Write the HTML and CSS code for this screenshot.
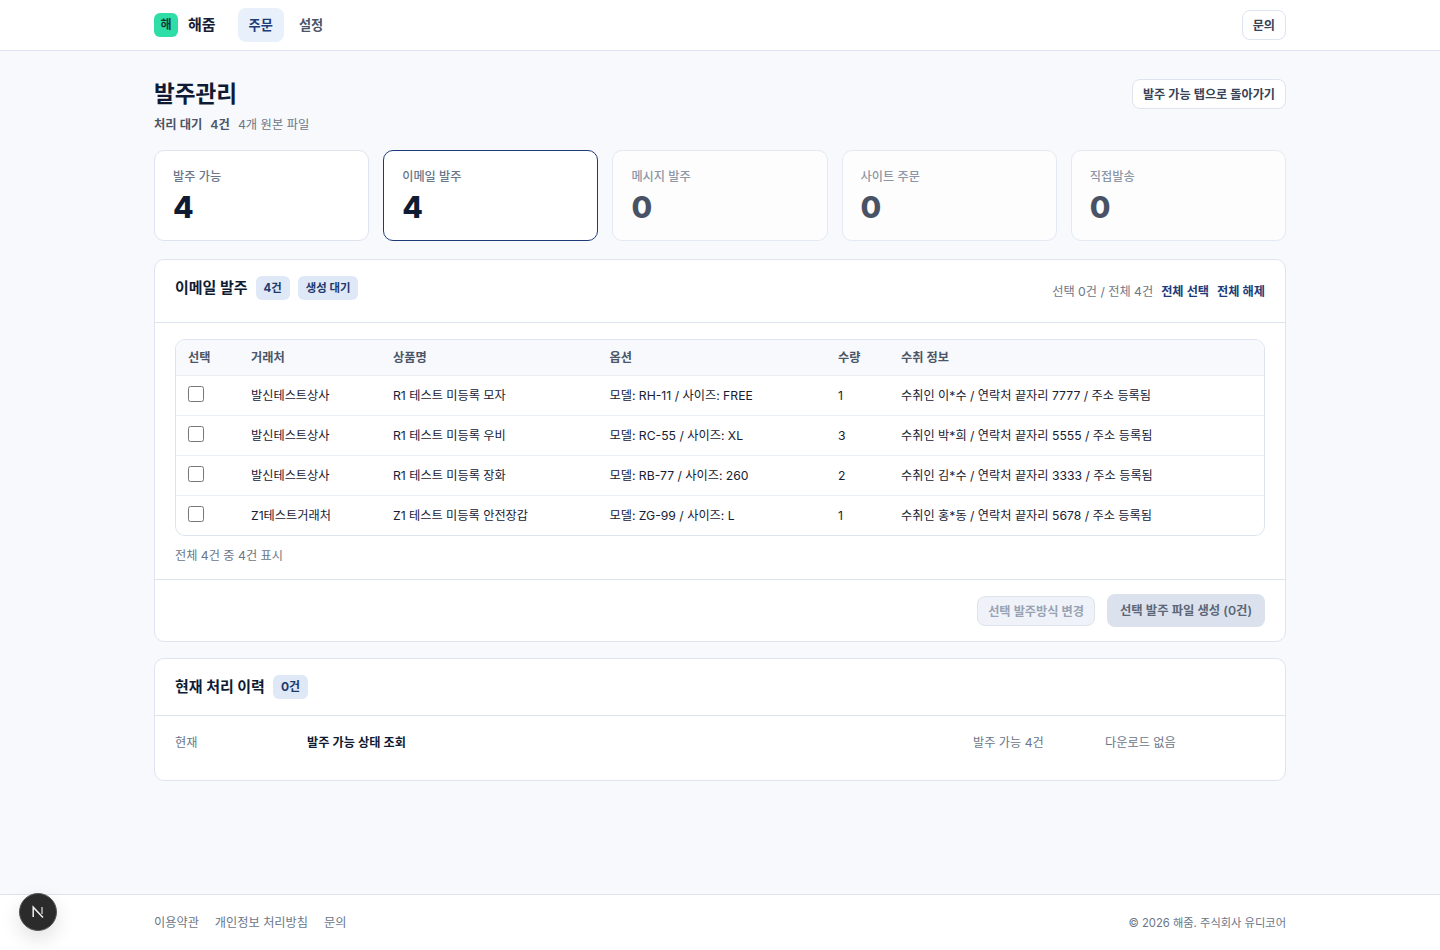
FILE: index.html
```html
<!DOCTYPE html>
<html lang="ko">
<head>
	<meta charset="utf-8">
	<title>발주관리</title>
	<link rel="stylesheet" href="styles.css">
</head>
<body>
	<header class="topbar">
		<div class="wrap topbar-inner">
			<div class="topbar-left">
				<a class="brand"><span class="brand-mark">해</span><span class="brand-name">해줌</span></a>
				<nav class="nav">
					<a class="nav-item active">주문</a>
					<a class="nav-item">설정</a>
				</nav>
			</div>
			<button class="btn-outline btn-small">문의</button>
		</div>
	</header>

	<main class="wrap main">
		<div class="page-head">
			<div>
				<h1 class="page-title">발주관리</h1>
				<p class="page-sub"><b>처리 대기</b><b>4건</b><span>4개 원본 파일</span></p>
			</div>
			<button class="btn-outline btn-back">발주 가능 탭으로 돌아가기</button>
		</div>

		<div class="stats">
			<div class="stat"><div class="stat-label">발주 가능</div><div class="stat-value">4</div></div>
			<div class="stat selected"><div class="stat-label">이메일 발주</div><div class="stat-value">4</div></div>
			<div class="stat muted"><div class="stat-label">메시지 발주</div><div class="stat-value">0</div></div>
			<div class="stat muted"><div class="stat-label">사이트 주문</div><div class="stat-value">0</div></div>
			<div class="stat muted"><div class="stat-label">직접발송</div><div class="stat-value">0</div></div>
		</div>

		<section class="panel">
			<div class="panel-head order-head">
				<div class="panel-title-row">
					<h2 class="panel-title">이메일 발주</h2>
					<span class="chip">4건</span>
					<span class="chip">생성 대기</span>
				</div>
				<div class="select-info">
					<span>선택 0건 / 전체 4건</span>
					<a class="link">전체 선택</a>
					<a class="link">전체 해제</a>
				</div>
			</div>
			<div class="panel-body">
				<div class="table-box">
					<table class="orders">
						<colgroup>
							<col class="col-check"><col class="col-vendor"><col class="col-product">
							<col class="col-option"><col class="col-qty"><col>
						</colgroup>
						<thead>
							<tr><th>선택</th><th>거래처</th><th>상품명</th><th>옵션</th><th>수량</th><th>수취 정보</th></tr>
						</thead>
						<tbody>
							<tr>
								<td><input type="checkbox" class="check"></td>
								<td>발신테스트상사</td>
								<td>R1 테스트 미등록 모자</td>
								<td>모델: RH-11 / 사이즈: FREE</td>
								<td>1</td>
								<td>수취인 이*수 / 연락처 끝자리 7777 / 주소 등록됨</td>
							</tr>
							<tr>
								<td><input type="checkbox" class="check"></td>
								<td>발신테스트상사</td>
								<td>R1 테스트 미등록 우비</td>
								<td>모델: RC-55 / 사이즈: XL</td>
								<td>3</td>
								<td>수취인 박*희 / 연락처 끝자리 5555 / 주소 등록됨</td>
							</tr>
							<tr>
								<td><input type="checkbox" class="check"></td>
								<td>발신테스트상사</td>
								<td>R1 테스트 미등록 장화</td>
								<td>모델: RB-77 / 사이즈: 260</td>
								<td>2</td>
								<td>수취인 김*수 / 연락처 끝자리 3333 / 주소 등록됨</td>
							</tr>
							<tr>
								<td><input type="checkbox" class="check"></td>
								<td>Z1테스트거래처</td>
								<td>Z1 테스트 미등록 안전장갑</td>
								<td>모델: ZG-99 / 사이즈: L</td>
								<td>1</td>
								<td>수취인 홍*동 / 연락처 끝자리 5678 / 주소 등록됨</td>
							</tr>
						</tbody>
					</table>
				</div>
				<p class="table-count">전체 4건 중 4건 표시</p>
			</div>
			<div class="panel-foot">
				<button class="btn-soft" disabled>선택 발주방식 변경</button>
				<button class="btn-primary" disabled>선택 발주 파일 생성 (0건)</button>
			</div>
		</section>

		<section class="panel">
			<div class="panel-head history-head">
				<div class="panel-title-row">
					<h2 class="panel-title">현재 처리 이력</h2>
					<span class="chip chip-large">0건</span>
				</div>
			</div>
			<div class="history-row">
				<span class="history-when">현재</span>
				<b class="history-what">발주 가능 상태 조회</b>
				<span class="history-count">발주 가능 4건</span>
				<span>다운로드 없음</span>
			</div>
		</section>
	</main>

	<footer class="footer">
		<div class="wrap footer-inner">
			<div class="footer-links">
				<a>이용약관</a>
				<a>개인정보 처리방침</a>
				<a>문의</a>
			</div>
			<div class="copyright">© 2026 해줌. 주식회사 유디코어</div>
		</div>
	</footer>

	<div class="dev-badge">
		<svg width="20" height="20" viewBox="0 0 20 20" fill="none">
			<path d="M5.2 15V5.2L15 15.6" stroke="#f2f2f2" stroke-width="1.5"/>
			<path d="M14 5v7" stroke="#bdbdbd" stroke-width="1.5"/>
		</svg>
	</div>
</body>
</html>
```

FILE: styles.css
```css
* {
	box-sizing: border-box;
}

html, body {
	margin: 0;
	padding: 0;
}

body {
	min-height: 950px;
	display: flex;
	flex-direction: column;
	background-color: #f7f9fd;
	color: #0f1b33;
	font-family: Inter, "Noto Sans CJK KR", sans-serif;
	font-size: 12.2px;
}

button {
	font-family: inherit;
}

.wrap {
	width: 1132px;
	margin: 0 auto;
}

/* top bar */
.topbar {
	height: 51px;
	background-color: #fff;
	border-bottom: 1px solid #dde4ef;
}

.topbar-inner {
	height: 50px;
	display: flex;
	align-items: center;
	justify-content: space-between;
}

.topbar-left {
	display: flex;
	align-items: center;
	gap: 22px;
}

.brand {
	display: flex;
	align-items: center;
	gap: 10px;
}

.brand-mark {
	width: 24px;
	height: 24px;
	border-radius: 6px;
	background-color: #2fdda6;
	color: #0f3b3a;
	font-size: 12px;
	font-weight: 700;
	line-height: 24px;
	text-align: center;
}

.brand-name {
	font-size: 15px;
	font-weight: 700;
	line-height: 22px;
	color: #172033;
}

.nav {
	display: flex;
	gap: 4px;
}

.nav-item {
	height: 34px;
	padding: 0 11px;
	border-radius: 8px;
	font-size: 13.2px;
	font-weight: 600;
	line-height: 34px;
	color: #4b5567;
}

.nav-item.active {
	background-color: #e8f0fc;
	color: #1d3b78;
}

.btn-outline {
	background-color: #fff;
	border: 1px solid #dde4ef;
	border-radius: 8px;
	color: #374357;
	font-size: 12.15px;
	font-weight: 600;
	line-height: 24px;
	padding: 2px 10px 0;
}

.btn-small,
.btn-back {
	height: 30px;
}

/* page head */
.main {
	flex: 1;
	padding-top: 28px;
}

.page-head {
	display: flex;
	justify-content: space-between;
	align-items: flex-start;
}

.page-title {
	margin: 0;
	font-size: 22.6px;
	font-weight: 700;
	line-height: 30px;
	color: #0f1b33;
}

.page-sub {
	margin: 7px 0 0;
	display: flex;
	gap: 8px;
	font-size: 12.3px;
	line-height: 18px;
	color: #6b7688;
}

.page-sub b {
	font-weight: 600;
	color: #4b5567;
}

/* stat cards */
.stats {
	display: grid;
	grid-template-columns: repeat(5, 1fr);
	gap: 14px;
	margin-top: 16px;
}

.stat {
	height: 91px;
	padding: 17px 18px;
	background-color: #fff;
	border: 1px solid #dde4ef;
	border-radius: 10px;
}

.stat.selected {
	border-color: #1d3b78;
}

.stat.muted {
	opacity: .75;
}

.stat-label {
	font-size: 12.2px;
	line-height: 18px;
	font-weight: 500;
	color: #6b7688;
}

.stat-value {
	margin-top: 3px;
	font-size: 30px;
	font-weight: 800;
	line-height: 36px;
	color: #0f1b33;
}

/* panels */
.panel {
	margin-top: 18px;
	background-color: #fff;
	border: 1px solid #dde4ef;
	border-radius: 10px;
}

.panel + .panel {
	margin-top: 16px;
}

.panel-head {
	display: flex;
	justify-content: space-between;
	padding: 16px 20px 0;
	border-bottom: 1px solid #dde4ef;
}

.order-head {
	height: 63px;
}

.history-head {
	height: 57px;
}

.panel-title-row {
	display: flex;
	align-items: center;
	gap: 8px;
	height: 24px;
}

.panel-title {
	margin: 0;
	font-size: 15px;
	font-weight: 700;
	line-height: 20px;
	color: #0f1b33;
}

.chip {
	height: 24px;
	padding: 0 8px;
	border-radius: 6px;
	background-color: #dfe8f6;
	color: #1e3a6b;
	font-size: 11.4px;
	font-weight: 700;
	line-height: 24px;
}

.chip-large {
	font-size: 12px;
}

.select-info {
	display: flex;
	gap: 8px;
	padding-top: 7px;
	line-height: 18px;
	color: #6b7688;
}

.link {
	color: #1d3b78;
	font-weight: 600;
}

.panel-body {
	padding: 16px 20px 14px;
}

.table-box {
	border: 1px solid #dde4ef;
	border-radius: 10px;
	overflow: hidden;
}

.orders {
	width: 100%;
	border-collapse: collapse;
	table-layout: fixed;
	font-size: 12.2px;
	line-height: 18px;
}

.col-check { width: 63px; }
.col-vendor { width: 142px; }
.col-product { width: 216.5px; }
.col-option { width: 228.5px; }
.col-qty { width: 63px; }

.orders th {
	height: 35px;
	padding: 2px 12px 0;
	background-color: #f7f9fd;
	border-bottom: 1px solid #eaeef5;
	text-align: left;
	font-weight: 600;
	color: #4b5567;
}

.orders td {
	height: 40px;
	padding: 1px 12px 0;
	border-bottom: 1px solid #eaeef5;
	color: #172033;
}

.orders tbody tr:last-child td {
	border-bottom: none;
}

.check {
	display: block;
	width: 16px;
	height: 16px;
	margin: 0 0 4px;
}

.table-count {
	margin: 11px 0 0;
	line-height: 18px;
	color: #6b7688;
}

.panel-foot {
	display: flex;
	justify-content: flex-end;
	align-items: center;
	gap: 12px;
	height: 62px;
	padding: 0 20px;
	border-top: 1px solid #dde4ef;
}

.btn-soft {
	height: 30px;
	margin-top: 1px;
	padding: 0 10px 1px;
	background-color: #eff3f9;
	border: 1px solid #dde4ef;
	border-radius: 8px;
	color: #98a2b3;
	font-size: 12.2px;
	font-weight: 600;
}

.btn-primary {
	height: 33px;
	padding: 0 13px 1px;
	background-color: #dbe2ed;
	border: none;
	border-radius: 8px;
	color: #5b6678;
	font-size: 12.35px;
	font-weight: 600;
}

.history-row {
	display: flex;
	align-items: center;
	height: 64px;
	padding: 0 20px 10px;
	line-height: 18px;
	color: #6b7688;
}

.history-when { width: 132px; }

.history-what {
	width: 666px;
	font-weight: 600;
	color: #0f1b33;
}

.history-count { width: 132px; }

/* footer */
.footer {
	height: 56px;
	background-color: #fff;
	border-top: 1px solid #dde4ef;
	color: #6b7688;
}

.footer-inner {
	height: 55px;
	display: flex;
	align-items: center;
	justify-content: space-between;
	line-height: 18px;
	padding-top: 1px;
}

.footer-links {
	display: flex;
	gap: 16px;
}

.copyright {
	font-size: 11.25px;
}

/* floating dev badge */
.dev-badge {
	position: fixed;
	left: 19px;
	top: 893px;
	width: 38px;
	height: 38px;
	border-radius: 50%;
	background-color: #2b2b2b;
	border: 1px solid #555;
	box-shadow: 0 8px 20px rgba(0, 0, 0, .12);
	display: flex;
	align-items: center;
	justify-content: center;
}
```
